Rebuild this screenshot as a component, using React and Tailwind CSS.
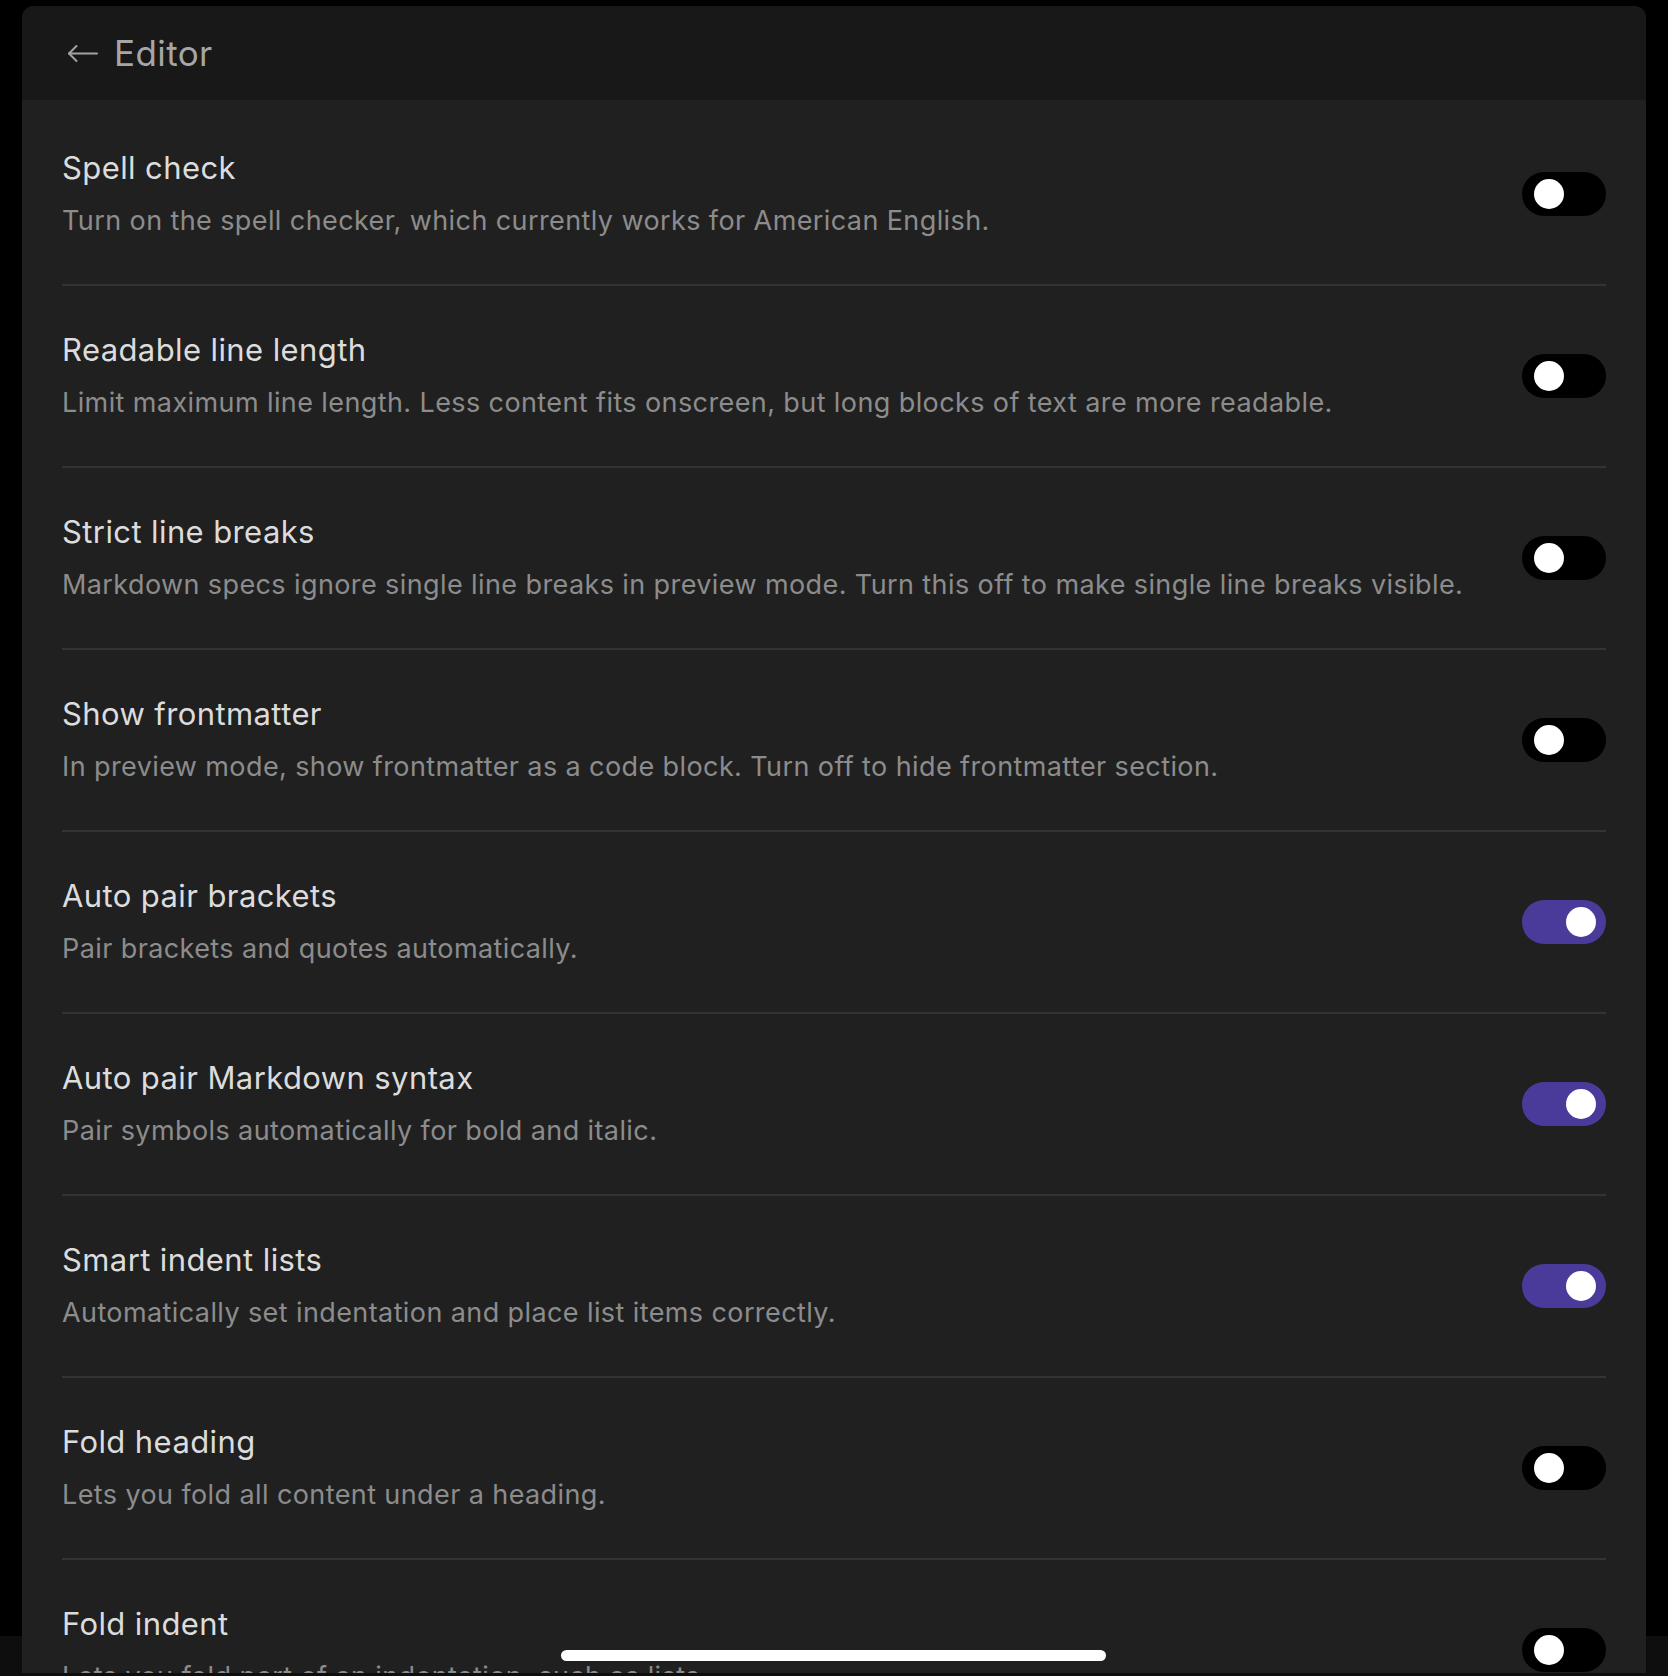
import React, { useState } from 'react';

const settings = [
    { title: 'Spell check', desc: 'Turn on the spell checker, which currently works for American English.', on: false },
    { title: 'Readable line length', desc: 'Limit maximum line length. Less content fits onscreen, but long blocks of text are more readable.', on: false },
    { title: 'Strict line breaks', desc: 'Markdown specs ignore single line breaks in preview mode. Turn this off to make single line breaks visible.', on: false },
    { title: 'Show frontmatter', desc: 'In preview mode, show frontmatter as a code block. Turn off to hide frontmatter section.', on: false },
    { title: 'Auto pair brackets', desc: 'Pair brackets and quotes automatically.', on: true },
    { title: 'Auto pair Markdown syntax', desc: 'Pair symbols automatically for bold and italic.', on: true },
    { title: 'Smart indent lists', desc: 'Automatically set indentation and place list items correctly.', on: true },
    { title: 'Fold heading', desc: 'Lets you fold all content under a heading.', on: false },
    { title: 'Fold indent', desc: 'Lets you fold part of an indentation, such as lists.', on: false },
];

// Переключатель
function Toggle({ on, onChange }) {
    return (
        <button
            onClick={onChange}
            className={`relative shrink-0 w-[84px] h-[44px] rounded-full ${on ? 'bg-[#4a3b9b]' : 'bg-black'}`}
        >
            <span
                className={`absolute top-[7px] w-[30px] h-[30px] rounded-full bg-white ${on ? 'left-[44px]' : 'left-[12px]'}`}
            ></span>
        </button>
    );
}

export default function App() {
    const [values, setValues] = useState(settings.map((s) => s.on));

    const flip = (i) => setValues((prev) => prev.map((v, j) => (j === i ? !v : v)));

    return (
        <div
            className="relative h-[1676px] bg-black overflow-hidden pt-[6px] px-[22px]"
            style={{ fontFamily: 'Inter, "Noto Sans", sans-serif' }}
        >
            {/* нижняя полоса */}
            <div className="absolute left-0 right-0 bottom-0 h-[40px] bg-[#0e0e0e]"></div>

            <div className="relative h-[1667px] rounded-t-[12px] bg-[#202020] overflow-hidden">
                {/* Шапка */}
                <div className="h-[94px] bg-[#181818] flex items-center pl-[45px] gap-[16px]">
                    <svg width="31" height="19" viewBox="0 0 31 19" fill="none" stroke="#a3a3a3" strokeWidth="2" strokeLinecap="round" strokeLinejoin="round">
                        <path d="M30 9.5H2" />
                        <path d="M9.5 2L2 9.5L9.5 17" />
                    </svg>
                    <span className="text-[35px] leading-none text-[#a6a6a6] tracking-[0.4px]">Editor</span>
                </div>

                {/* Список */}
                <div className="pt-[4px] px-[40px]">
                    {settings.map((s, i) => (
                        <div
                            key={s.title}
                            className="h-[182px] flex items-center justify-between gap-8 border-b-2 border-[#333333]"
                        >
                            <div className="flex flex-col">
                                <div className="text-[31px] leading-[40px] text-[#dcdcdc] tracking-[0.4px]">{s.title}</div>
                                <div className="mt-[13px] text-[27px] leading-[40px] text-[#8c8c8c] tracking-[0.4px]">{s.desc}</div>
                            </div>
                            <Toggle on={values[i]} onChange={() => flip(i)} />
                        </div>
                    ))}
                </div>

                {/* Индикатор */}
                <div className="absolute left-[539px] top-[1644px] w-[545px] h-[11px] rounded-full bg-white"></div>
            </div>
        </div>
    );
}
